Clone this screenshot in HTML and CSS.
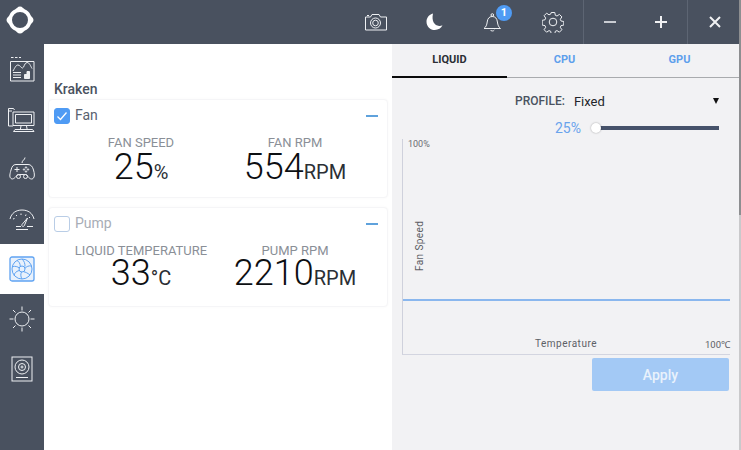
FILE: index.html
```html
<!DOCTYPE html>
<html lang="en">
<head>
<meta charset="utf-8">
<title>Kraken</title>
<link rel="stylesheet" href="styles.css">
</head>
<body>
<div class="app">
  <header class="topbar">
    <div class="logo">
      <svg width="28" height="28" viewBox="0 0 28 28"><path class="solid" fill-rule="evenodd" d="M14 .5c2.500 0 3 2 5 3s4.500 2.500 5.500 5.500c.7 2 3 2.500 3 5s-2.300 3-3 5c-1 3-3.500 4.500-5.500 5.500s-2.500 3-5 3-3-2-5-3-4.500-2.500-5.500-5.500c-.7-2-3-2.500-3-5s2.300-3 3-5c1-3 3.500-4.500 5.500-5.500s2.500-3 5-3zM14 6a8 8 0 1 0 0 16 8 8 0 0 0 0-16z"/></svg>
    </div>
    <div class="tools">
      <span class="tool tool-cam">
        <svg width="24" height="20" viewBox="0 0 24 20" class="ico"><path d="M1.500 5h5l1.500-2.500h7L16.500 5h6v13h-21z"/><circle cx="11.500" cy="11" r="5"/><circle cx="11.500" cy="11" r="2.800"/><path d="M3 3.500h2"/></svg>
      </span>
      <span class="tool tool-moon">
        <svg width="22" height="22" viewBox="0 0 22 22"><path class="solid" d="M9 2.500C5 3.500 2.500 6.800 2.500 10.700c0 4.800 3.800 8.300 8.300 8.300 3.500 0 6.300-1.900 7.700-4.700-1.100.5-2.200.7-3.400.6C10.500 14.600 7.300 10 9 2.500z"/></svg>
      </span>
      <span class="tool">
        <svg width="22" height="22" viewBox="0 0 22 22" class="ico"><path d="M2 17.500c2-1.500 2.800-3.500 3.200-6.500.4-3.500 2-5.500 5-5.500 3.200 0 4.800 2 5.200 5.500.4 3 1.200 5 3.100 6.500z"/><path d="M8.500 19c.3 1.300 3.300 1.300 3.800 0"/><circle cx="10.300" cy="4" r="1.300"/></svg>
        <span class="badge">1</span>
      </span>
      <span class="tool tool-gear">
        <svg width="22" height="22" viewBox="0 0 22 22" class="ico"><path d="M9.200 1.500h3.600l.5 2.800 1.700.7 2.400-1.600 2.500 2.500-1.600 2.400.7 1.700 2.800.5v3.600l-2.800.5-.7 1.700 1.600 2.400-2.500 2.500-2.400-1.600-1.700.7-.5 2.800H9.200l-.5-2.800-1.700-.7-2.400 1.600-2.500-2.500 1.600-2.400-.7-1.700-2.800-.5V9.300l2.800-.5.7-1.700L2.100 4.700l2.500-2.500L7 3.800l1.700-.7z"/><circle cx="11" cy="11" r="3.800"/></svg>
      </span>
    </div>
    <div class="winbtns">
      <span class="win win-min"><i class="dash"></i></span>
      <span class="win win-plus"><svg width="14" height="14" viewBox="0 0 14 14" class="winico"><path d="M7 1v12M1 7h12"/></svg></span>
      <span class="win win-x"><svg width="12" height="12" viewBox="0 0 12 12" class="winico"><path d="M1 1l10 10M11 1L1 11"/></svg></span>
    </div>
  </header>
  <div class="main">
    <nav class="side">
      <a class="nav">
        <svg width="28" height="26" viewBox="0 0 28 26" class="ico"><path d="M2.500 5.500h23.500v19.500H2.500z"/><path d="M3 1.500h2.500M7 1.500h2.500M11 1.500h2"/><path d="M5 15c2-3.500 3-6 5-6s3 3 4.500 3 2-5.500 4.500-5.500 3.500 3.500 5 6"/><path d="M5 16.500h8M5 19h8M5 21.500h8"/><path d="M16.500 22.500v-4h2.500v-3h2.500v7z" class="fill"/></svg>
      </a>
      <a class="nav">
        <svg width="30" height="28" viewBox="0 0 30 28" class="ico"><path d="M6 21H1.500V3.500h5l1 1.500M5 6H1.500"/><path d="M6 7h21v13.500H6z"/><path d="M8.500 9.500h16V18h-16z"/><path d="M14 21l-.7 3.500M19.500 21l.7 3.500M8 24.500h17.500l1.500 2H6.500z"/></svg>
      </a>
      <a class="nav">
        <svg width="28" height="26" viewBox="0 0 28 26" class="ico"><path d="M17 1.500c0 2.500-3 2.500-3 5.500"/><path d="M8 8.500h12c3 0 4.500 2 5.500 5.500s1.500 7-.5 8.500-4-.5-5.500-2.500-2-1.500-5.500-1.500-4 0-5.500 1.500-3.500 4-5.500 2.500-1-5 0-8.500S5 8.500 8 8.500z"/><path d="M9 11v5M6.500 13.500h5"/><circle cx="18" cy="11.500" r=".7"/><circle cx="18" cy="15.500" r=".7"/><circle cx="16" cy="13.500" r=".7"/><circle cx="20" cy="13.500" r=".7"/><circle cx="10.500" cy="20.500" r="2"/><circle cx="17.500" cy="20.500" r="2"/></svg>
      </a>
      <a class="nav">
        <svg width="28" height="24" viewBox="0 0 28 24" class="ico"><path d="M2 12C3.500 6 8 3 14 3s10.500 3 12 9"/><path d="M5 12l1.500-.5M8 8l1 1M13 6.500V8M18 7.500l-.5 1.500M22 10l-1 1"/><path d="M19.500 11l-5.500 6.500c-1 1.500 1.200 2.700 2.300 1.200z"/><path d="M8 19.500h5M8 22.500h12M19 19.500h6"/></svg>
      </a>
      <a class="nav active">
        <svg width="26" height="26" viewBox="0 0 26 26" class="ico-blue"><rect class="fan-box" x="1" y="1" width="24" height="24" rx="2"/><circle cx="13" cy="13" r="10"/><circle cx="13" cy="13" r="3"/><path d="M13 3c2.500 2.500 3 4.500 3 7.500M22.500 10c-3-.5-4.800.5-6.500 2.300M21 19c-2.500-2-4.500-3-6.300-3.200M13 23c-1.500-2.500-1.500-5-.5-7M5 19.500c.5-2.500 2-4 5-5M3.500 10.500c2.500-.5 5 0 7 1.500M8 4.500c2 1 3.200 3 3.300 5.800"/></svg>
      </a>
      <a class="nav">
        <svg width="28" height="28" viewBox="0 0 28 28" class="ico"><circle cx="14" cy="14" r="7"/><path d="M14 1.500v4M14 22.500v4M1.500 14h4M22.500 14h4M5 5l2.500 2.500M20.500 20.500L23 23M5 23l2.500-2.500M20.500 7.500L23 5"/></svg>
      </a>
      <a class="nav">
        <svg width="22" height="26" viewBox="0 0 22 26" class="ico"><rect x="1" y="1" width="20" height="24"/><circle cx="11" cy="11" r="7"/><circle cx="11" cy="11" r="3.500"/><circle cx="11" cy="11" r="1"/><path d="M5 21.500h12"/></svg>
      </a>
    </nav>
    <section class="left">
      <h1 class="title">Kraken</h1>
      <div class="card">
        <div class="card-head">
          <span class="check on"><svg width="16" height="16" viewBox="0 0 16 16"><path d="M3.500 8.500l3 3 6-7"/></svg></span>
          <span class="card-name">Fan</span>
          <i class="collapse"></i>
        </div>
        <div class="stats stats-fan">
          <div class="stat stat-a"><div class="label">FAN SPEED</div><div class="value">25<small>%</small></div></div>
          <div class="stat stat-b"><div class="label">FAN RPM</div><div class="value">554<small>RPM</small></div></div>
        </div>
      </div>
      <div class="card card-tall">
        <div class="card-head">
          <span class="check"></span>
          <span class="card-name off">Pump</span>
          <i class="collapse"></i>
        </div>
        <div class="stats">
          <div class="stat stat-a"><div class="label">LIQUID TEMPERATURE</div><div class="value">33<small>°C</small></div></div>
          <div class="stat stat-b"><div class="label">PUMP RPM</div><div class="value">2210<small>RPM</small></div></div>
        </div>
      </div>
    </section>
    <section class="right">
      <div class="tabs">
        <span class="tab current">LIQUID</span>
        <span class="tab">CPU</span>
        <span class="tab">GPU</span>
      </div>
      <div class="profile">
        <span class="profile-label">PROFILE:</span>
        <span class="profile-value">Fixed</span>
        <span class="caret"></span>
      </div>
      <div class="slider-row">
        <span class="pct">25%</span>
        <div class="slider"><span class="thumb"></span></div>
      </div>
      <div class="chart">
        <span class="chart-top">100%</span>
        <span class="chart-y">Fan Speed</span>
        <span class="chart-line"></span>
        <span class="chart-x">Temperature</span>
        <span class="chart-end">100℃</span>
      </div>
      <div class="actions"><button class="apply">Apply</button></div>
    </section>
  </div>
  <div class="scroll"><span class="scroll-thumb"></span></div>
</div>
</body>
</html>
```
FILE: styles.css
```css
* { box-sizing: border-box; }
html, body { margin: 0; padding: 0; }
body { width: 741px; height: 450px; overflow: hidden; font-family: Roboto, "Liberation Sans", sans-serif; background: #fff; }
.app { position: relative; width: 741px; height: 450px; display: flex; flex-direction: column; }
.topbar { height: 44px; background: #49515f; display: flex; align-items: center; flex: none; }
.logo { width: 40px; height: 44px; display: flex; align-items: center; justify-content: center; margin-right: 305px; padding: 0 1px 4px 0; }
.tools { display: flex; width: 238px; }
.tool { width: 59px; height: 44px; position: relative; display: flex; align-items: center; justify-content: center; }
.tool-cam { padding-left: 2px; }
.tool-moon { padding-left: 3px; }
.tool-gear { padding-left: 2px; }
.ico { fill: none; stroke: #eef0f3; stroke-width: 1; }
.ico .fill { fill: #eef0f3; }
.solid { fill: #fff; }
.badge { position: absolute; left: 33px; top: 5px; width: 16px; height: 16px; border-radius: 50%; background: #4f9bf4; color: #fff; font-size: 11px; font-weight: 700; line-height: 16px; text-align: center; }
.winbtns { display: flex; height: 44px; }
.win { display: flex; align-items: center; justify-content: center; height: 44px; }
.win-min { width: 52px; border-left: 1px solid #5d6573; }
.win-plus { width: 52px; }
.win-x { width: 54px; border-left: 1px solid #5d6573; }
.dash { display: block; width: 12px; height: 2px; background: #c9ccd2; }
.winico { fill: none; stroke: #f0f1f3; stroke-width: 2; }
.main { flex: 1; display: flex; min-height: 0; }
.side { width: 44px; background: #49515f; display: flex; flex-direction: column; flex: none; }
.nav { height: 50px; display: flex; align-items: center; justify-content: center; flex: none; }
.nav.active { background: #fff; }
.ico-blue { fill: none; stroke: #5fa3f2; stroke-width: 1; }
.ico-blue .fan-box { fill: #e8f1fc; stroke-width: 1.300; }
.left { width: 348px; background: #fff; padding: 0 4px; flex: none; }
.title { margin: 36px 0 1px 6px; font-size: 14px; line-height: 18px; font-weight: 500; color: #4a5260; }
.card { height: 99px; margin-bottom: 9px; background: #fff; border: 1px solid #f5f5f7; border-radius: 4px; box-shadow: 0 0 3px rgba(0,0,0,.03); }
.card-tall { height: 100px; }
.card-head { display: flex; align-items: center; height: 32px; padding: 0 9px 0 5px; }
.check { width: 16px; height: 16px; border-radius: 3px; border: 1px solid #b9cde6; display: flex; flex: none; }
.check.on { background: #4f9bf4; border-color: #4f9bf4; }
.check.on svg { margin: -1px; fill: none; stroke: #fff; stroke-width: 1.300; }
.card-name { margin: 0 0 2px 5px; font-size: 14px; color: #5a6270; flex: 1; }
.card-name.off { color: #a8adb6; }
.collapse { width: 12px; height: 2px; background: #5fa2dc; display: block; }
.stats { display: flex; padding-top: 2px; }
.stat { text-align: center; }
.stat-a { width: 184px; }
.stat-b { width: 124px; }
.label { font-size: 13px; line-height: 13px; color: #8a8f97; margin-top: 2px; }
.value { font-size: 36px; line-height: 32px; font-weight: 350; color: #0d0f12; white-space: nowrap; }
.stats-fan .value { padding-top: 2px; }
.value small { font-size: 20px; font-weight: 400; color: #2b2f35; }
.right { width: 349px; background: #f2f2f4; flex: none; display: flex; flex-direction: column; }
.tabs { display: flex; height: 34px; border-bottom: 1px solid #a9abae; flex: none; }
.tab { width: 115px; height: 34px; text-align: center; font-size: 11px; font-weight: 700; line-height: 32px; color: #5e9fec; }
.tab.current { color: #2b2f35; border-bottom: 2px solid #0b0b0b; }
.profile { display: flex; align-items: center; height: 18px; margin-top: 14px; flex: none; }
.profile-label { margin-left: 123px; font-size: 12px; font-weight: 500; color: #4a5260; }
.profile-value { margin-left: 9px; font-size: 13px; color: #22252a; flex: 1; }
.caret { width: 0; height: 0; border-left: 3px solid transparent; border-right: 3px solid transparent; border-top: 6px solid #111; margin-right: 22px; }
.slider-row { display: flex; align-items: center; height: 16px; margin-top: 10px; flex: none; }
.pct { margin-left: 163px; font-size: 14px; color: #69a3ec; width: 41px; }
.slider { width: 123px; height: 4px; background: #46526a; position: relative; }
.thumb { position: absolute; left: -5px; top: -3px; width: 10px; height: 10px; border-radius: 50%; background: #fff; box-shadow: 0 0 2px rgba(0,0,0,.35); }
.chart { position: relative; width: 328px; height: 216px; margin-left: 10px; margin-top: 3px; border-left: 1px solid #cfd1dc; border-bottom: 1px solid #d3d5e0; flex: none; }
.chart-top { position: absolute; left: 5px; top: 0; font-size: 9px; color: #6a6d72; }
.chart-y { position: absolute; left: 11px; top: 132px; font-size: 10px; letter-spacing: .4px; line-height: 11px; color: #5d6066; transform: rotate(-90deg); transform-origin: left top; white-space: nowrap; }
.chart-line { position: absolute; left: 0; right: 0; top: 160px; height: 2px; background: #8ab7ee; }
.chart-x { position: absolute; left: 132px; top: 199px; font-size: 10px; color: #5d6066; letter-spacing: .5px; }
.chart-end { position: absolute; right: 0; top: 199px; font-size: 9.500px; color: #5d6066; }
.actions { display: flex; justify-content: flex-end; padding-right: 12px; margin-top: 3px; flex: none; }
.apply { width: 137px; height: 33px; border: 0; border-radius: 2px; background: #a3c9f5; color: #e9f2fc; font-family: inherit; font-size: 14px; font-weight: 500; }
.scroll { position: absolute; right: 0; top: 0; bottom: 0; width: 2px; background: #c9c9cb; }
.scroll-thumb { display: block; height: 215px; background: #8d8e90; }
```
